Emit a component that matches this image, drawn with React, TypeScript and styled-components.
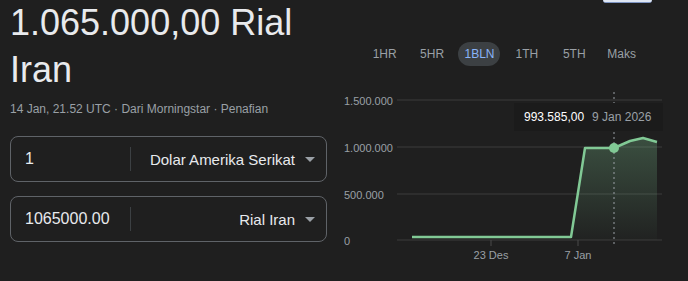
import { createGlobalStyle, styled } from "styled-components";

const GlobalStyle = createGlobalStyle`
  html, body {
    margin: 0;
    padding: 0;
    background: #1f1f1f;
    font-family: Arial, "Liberation Sans", sans-serif;
    overflow: hidden;
  }
`;

const ranges = ["1HR", "5HR", "1BLN", "1TH", "5TH", "Maks"];

const yTicks = [
  { label: "1.500.000", y: 10 },
  { label: "1.000.000", y: 57 },
  { label: "500.000", y: 104 },
  { label: "0", y: 150 },
];

const xTicks = [
  { label: "23 Des", x: 151 },
  { label: "7 Jan", x: 238 },
];

const points = [
  [72, 147],
  [231, 147],
  [245, 58],
  [274, 58],
  [290, 51],
  [303, 48],
  [317, 52],
];

const linePath = points.map((p, i) => `${i ? "L" : "M"}${p[0]},${p[1]}`).join(" ");
const areaPath =
  "M231,150 " +
  points
    .slice(1)
    .map((p) => `L${p[0]},${p[1]}`)
    .join(" ") +
  " L317,150 Z";

const Converter = ({ value, currency }: { value: string; currency: string }) => (
  <Field>
    <Amount>{value}</Amount>
    <Divider />
    <Select>
      <span>{currency}</span>
      <Caret />
    </Select>
  </Field>
);

const App = () => {
  return (
    <Page>
      <GlobalStyle />
      <LeftCol>
        <Title>1.065.000,00 Rial Iran</Title>
        <Meta>14 Jan, 21.52 UTC · Dari Morningstar · Penafian</Meta>
        <Fields>
          <Converter value="1" currency="Dolar Amerika Serikat" />
          <Converter value="1065000.00" currency="Rial Iran" />
        </Fields>
      </LeftCol>
      <RightCol>
        <TopRow>
          <ShareButton />
        </TopRow>
        <Tabs>
          {ranges.map((r) => (
            <Tab key={r}>
              <TabLabel $active={r === "1BLN"}>{r}</TabLabel>
            </Tab>
          ))}
        </Tabs>
        <ChartWrap>
          <svg width="348" height="180" viewBox="0 0 348 180">
            <defs>
              <linearGradient id="fill" x1="0" y1="0" x2="0" y2="1">
                <stop offset="0" stopColor="#81c995" stopOpacity="0.28" />
                <stop offset="1" stopColor="#81c995" stopOpacity="0.02" />
              </linearGradient>
            </defs>
            {yTicks.map((t) => (
              <g key={t.label}>
                <line x1="57" x2="322" y1={t.y} y2={t.y} stroke="#3c3c3c" strokeWidth="1" />
                <text x="4" y={t.y + 5} fill="#9aa0a6" fontSize="11" fontFamily="Arial, 'Liberation Sans', sans-serif">
                  {t.label}
                </text>
              </g>
            ))}
            {xTicks.map((t) => (
              <g key={t.label}>
                <line x1={t.x} x2={t.x} y1="150" y2="156" stroke="#4a4a4a" />
                <text
                  x={t.x}
                  y="169"
                  fill="#9aa0a6"
                  fontSize="11"
                  textAnchor="middle"
                  fontFamily="Arial, 'Liberation Sans', sans-serif"
                >
                  {t.label}
                </text>
              </g>
            ))}
            <path d={areaPath} fill="url(#fill)" />
            <path d={linePath} fill="none" stroke="#81c995" strokeWidth="2.5" strokeLinejoin="round" />
            <line x1="274" x2="274" y1="2" y2="154" stroke="#9aa0a6" strokeWidth="1" strokeDasharray="2 3" />
            <circle cx="274" cy="58" r="5" fill="#81c995" />
          </svg>
          <Tooltip>
            <strong>993.585,00</strong>
            <span>9 Jan 2026</span>
          </Tooltip>
        </ChartWrap>
      </RightCol>
    </Page>
  );
};

const Page = styled.div`
  display: flex;
  width: 688px;
  height: 281px;
  background: #1f1f1f;
  color: #e8eaed;
`;

const LeftCol = styled.div`
  width: 330px;
  padding-left: 10px;
  display: flex;
  flex-direction: column;
`;

const Title = styled.h1`
  margin: -1px 0 0;
  font-size: 36px;
  line-height: 47px;
  font-weight: 400;
  color: #e8eaed;
  width: 300px;
`;

const Meta = styled.div`
  margin-top: 8px;
  font-size: 12px;
  line-height: 16px;
  color: #9aa0a6;
`;

const Fields = styled.div`
  margin-top: 19px;
  width: 317px;
  display: flex;
  flex-direction: column;
  gap: 14px;
`;

const Field = styled.div`
  box-sizing: border-box;
  height: 46px;
  border: 1px solid #5f6368;
  border-radius: 8px;
  display: flex;
  align-items: center;
`;

const Amount = styled.div`
  width: 119px;
  box-sizing: border-box;
  padding-left: 14px;
  font-size: 16px;
  color: #e8eaed;
`;

const Divider = styled.div`
  width: 1px;
  height: 24px;
  background: #3c4043;
`;

const Select = styled.div`
  flex: 1;
  display: flex;
  align-items: center;
  justify-content: flex-end;
  gap: 10px;
  padding-right: 11px;
  font-size: 15px;
  color: #e8eaed;
`;

const Caret = styled.span`
  width: 0;
  height: 0;
  border-left: 5px solid transparent;
  border-right: 5px solid transparent;
  border-top: 5px solid #9aa0a6;
`;

const RightCol = styled.div`
  flex: 1;
  display: flex;
  flex-direction: column;
`;

const TopRow = styled.div`
  display: flex;
  padding-left: 263px;
`;

const ShareButton = styled.div`
  width: 49px;
  height: 2px;
  background: #dfe6f3;
  border-bottom: 1px solid #7d94c2;
  border-radius: 0 0 3px 3px;
`;

const Tabs = styled.div`
  margin-top: 39px;
  padding-left: 21px;
  display: flex;
`;

const Tab = styled.div`
  width: 47.4px;
  display: flex;
  justify-content: center;
`;

const TabLabel = styled.span<{ $active?: boolean }>`
  height: 24px;
  line-height: 24px;
  padding: 0 6px;
  border-radius: 12px;
  font-size: 12px;
  color: ${(p) => (p.$active ? "#8ab4f8" : "#9aa0a6")};
  background: ${(p) => (p.$active ? "#3c4043" : "transparent")};
`;

const ChartWrap = styled.div`
  position: relative;
  margin-top: 24px;
  height: 180px;
`;

const Tooltip = styled.div`
  position: absolute;
  left: 174px;
  top: 13px;
  height: 28px;
  padding: 0 12px 0 10px;
  display: flex;
  align-items: center;
  gap: 8px;
  background: #1b1b1b;
  font-size: 12px;
  color: #9aa0a6;

  strong {
    font-weight: 400;
    color: #ffffff;
  }
`;

export default App;
